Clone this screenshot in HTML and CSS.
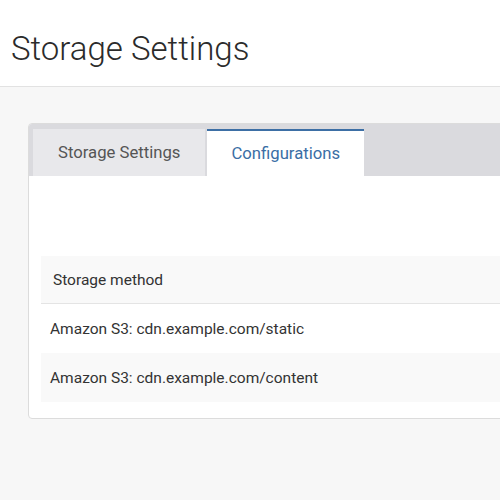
FILE: index.html
```html
<!DOCTYPE html>
<html>
<head>
<meta charset="utf-8">
<link rel="stylesheet" href="styles.css">
</head>
<body>
<header class="page-header">
  <h1 class="page-title">Storage Settings</h1>
</header>
<main class="page-main">
  <section class="card">
    <nav class="tabs">
      <div class="tab">Storage Settings</div>
      <div class="tab tab-active">Configurations</div>
    </nav>
    <div class="card-body">
      <table class="table">
        <thead>
          <tr><th>Storage method</th></tr>
        </thead>
        <tbody>
          <tr><td>Amazon S3: cdn.example.com/static</td></tr>
          <tr class="row-alt"><td>Amazon S3: cdn.example.com/content</td></tr>
        </tbody>
      </table>
    </div>
  </section>
</main>
</body>
</html>
```

FILE: styles.css
```css
html, body {
  margin: 0;
  padding: 0;
  background: #f7f7f7;
  font-family: Roboto, "Liberation Sans", sans-serif;
  overflow: hidden;
}

.page-header {
  background: #ffffff;
  height: 87px;
  box-sizing: border-box;
  border-bottom: 1px solid #e2e2e2;
  padding: 28px 0 0 11px;
}

.page-title {
  margin: 0;
  font-weight: 300;
  font-size: 33px;
  line-height: 42px;
  color: #2b2b2b;
}

.page-main {
  padding: 36px 0 0 28px;
}

.card {
  width: 640px;
  background: #ffffff;
  border: 1px solid #dcdcdc;
  border-radius: 4px 0 0 4px;
  overflow: hidden;
}

.tabs {
  display: flex;
  gap: 2px;
  background: #dadade;
  padding: 5px 0 0 4px;
}

.tab {
  height: 47px;
  line-height: 47px;
  padding: 0 25px;
  font-size: 16.7px;
  color: #555555;
  background: #e8e8eb;
}

.tab-active {
  background: #ffffff;
  color: #3a6ea5;
  border-top: 2px solid #3d6fa5;
  line-height: 45px;
  height: 45px;
  padding: 0 24px;
}

.card-body {
  padding: 80px 0 16px 12px;
}

.table {
  width: 100%;
  border-collapse: collapse;
  font-size: 15.5px;
  color: #333333;
}

.table th {
  text-align: left;
  font-weight: 400;
  background: #f9f9f9;
  height: 47px;
  padding: 0 0 0 12px;
  border-bottom: 1px solid #e4e4e4;
}

.table td {
  height: 49px;
  padding: 0 0 0 9px;
}

.row-alt td {
  background: #f9f9f9;
}
```
